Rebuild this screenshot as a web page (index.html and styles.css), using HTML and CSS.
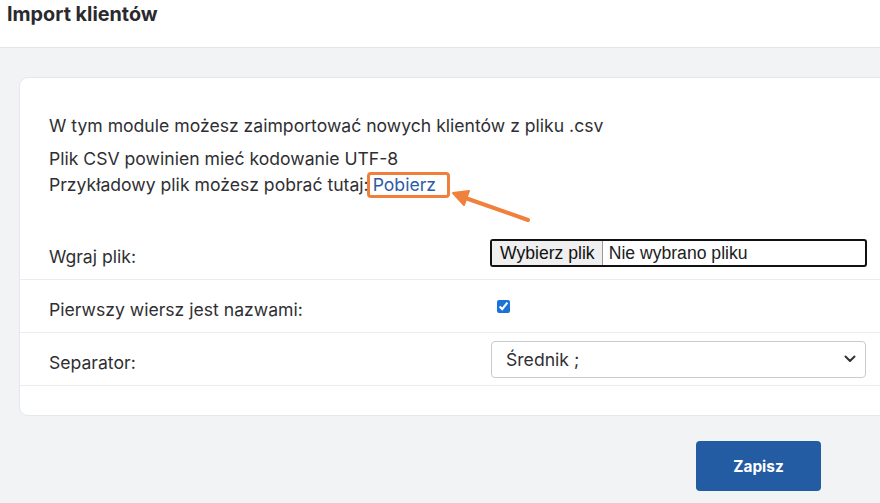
FILE: index.html
```html
<!DOCTYPE html>
<html lang="pl">
<head>
<meta charset="utf-8">
<title>Import klientów</title>
<link rel="stylesheet" href="styles.css">
</head>
<body>
<header class="topbar">
  <h1 class="title">Import klientów</h1>
</header>
<main class="content">
  <section class="card">
    <div class="intro">
      <p class="intro-lead">W tym module możesz zaimportować nowych klientów z pliku .csv</p>
      <p class="intro-line">Plik CSV powinien mieć kodowanie UTF-8</p>
      <p class="intro-line">Przykładowy plik możesz pobrać tutaj:<a class="link-hl" href="#">Pobierz</a></p>
    </div>
    <svg class="arrow" width="90" height="40" viewBox="0 0 90 40">
      <path d="M82 34 L18 11.5" stroke="#f0803b" stroke-width="4" stroke-linecap="round" fill="none"/>
      <path d="M7 7 L23 5 L18 19 Z" fill="#f0803b" stroke="#f0803b" stroke-width="2" stroke-linejoin="round"/>
    </svg>
    <div class="row row-first">
      <div class="label">Wgraj plik:</div>
      <div class="field">
        <label class="file">
          <input type="file" class="file-input">
          <span class="file-btn">Wybierz plik</span>
          <span class="file-name">Nie wybrano pliku</span>
        </label>
      </div>
    </div>
    <div class="row">
      <div class="label">Pierwszy wiersz jest nazwami:</div>
      <div class="field">
        <input type="checkbox" class="check" checked>
      </div>
    </div>
    <div class="row">
      <div class="label">Separator:</div>
      <div class="field">
        <div class="select">
          <span>Średnik ;</span>
          <svg class="chev" width="12" height="8" viewBox="0 0 12 8"><path d="M1.5 1.5 L6 6 L10.5 1.5" stroke="#333" stroke-width="2" fill="none" stroke-linecap="round" stroke-linejoin="round"/></svg>
        </div>
      </div>
    </div>
  </section>
  <div class="actions">
    <button class="btn-save" type="button">Zapisz</button>
  </div>
</main>
</body>
</html>
```
FILE: styles.css
```css
html, body {
  margin: 0;
  padding: 0;
}
body {
  width: 880px;
  height: 503px;
  overflow: hidden;
  background: #f2f3f5;
  font-family: Inter, "Noto Sans", sans-serif;
  color: #2f2f33;
}
.topbar {
  height: 48px;
  background: #fff;
  border-bottom: 1px solid #e3e5e8;
  box-sizing: border-box;
  padding: 1px 0 0 7px;
}
.title {
  margin: 0;
  font-size: 19.8px;
  font-weight: 700;
  line-height: 26px;
  color: #2a2a2e;
}
.content {
  padding: 29px 0 0 19px;
}
.card {
  position: relative;
  width: 900px;
  background: #fff;
  border: 1px solid #e5e7eb;
  border-radius: 9px;
  padding: 35px 0 29px 0;
}
.intro {
  padding: 0 29px;
  font-size: 17.6px;
}
.intro p {
  margin: 0;
  line-height: 26px;
  height: 26px;
}
.intro-lead {
  margin-bottom: 7px !important;
}
.link-hl {
  display: inline-block;
  color: #2d5ba6;
  text-decoration: none;
  border: 3px solid #ef7f3a;
  border-radius: 4px;
  padding: 0 11px 0 3px;
  line-height: 20px;
  vertical-align: 0;
  margin-left: -2px;
}
.arrow {
  position: absolute;
  left: 426px;
  top: 108px;
}
.row {
  display: flex;
  align-items: center;
  height: 52px;
  border-bottom: 1px solid #ececec;
  padding-left: 29px;
}
.row-first {
  margin-top: 29px;
}
.label {
  width: 441px;
  font-size: 17.6px;
  padding-top: 7px;
}
.field {
  display: flex;
  align-items: center;
}
.file {
  display: flex;
  align-items: stretch;
  width: 373px;
  height: 24px;
  border: 2px solid #111;
  border-radius: 3px;
  font-family: "Liberation Sans", Arial, sans-serif;
  font-size: 17.6px;
  cursor: pointer;
}
.file-input {
  display: none;
}
.file-btn {
  background: #efefef;
  border-right: 1px solid #9a9a9a;
  padding: 0 7px 0 8px;
  line-height: 24px;
  color: #111;
}
.file-name {
  padding-left: 6px;
  line-height: 24px;
  color: #222;
}
.check {
  margin: 0 0 0 7px;
  width: 13px;
  height: 13px;
  accent-color: #1b72d8;
}
.select {
  display: flex;
  align-items: center;
  justify-content: space-between;
  box-sizing: border-box;
  width: 375px;
  height: 37px;
  margin-left: 1px;
  border: 1px solid #c8cacd;
  border-radius: 4px;
  padding: 0 9px 0 14px;
  font-size: 17.6px;
  color: #2f2f33;
}
.actions {
  display: flex;
  justify-content: flex-end;
  padding: 25px 59px 0 0;
}
.btn-save {
  width: 125px;
  height: 50px;
  border: none;
  border-radius: 4px;
  background: #245ca3;
  color: #fff;
  font-family: Inter, sans-serif;
  font-weight: 700;
  font-size: 15.4px;
}
```
